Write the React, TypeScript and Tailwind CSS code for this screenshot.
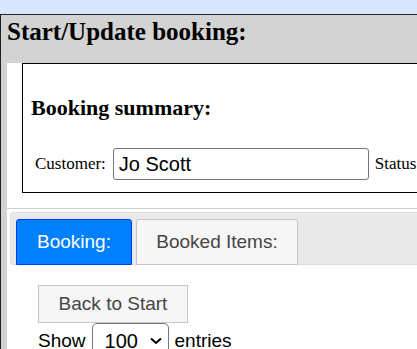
export default function App() {
  return (
    <div className="h-[349px] w-[417px] overflow-hidden bg-[#d8e7fb] pt-[14px]">
      <div className="w-[640px] border-t border-l border-[#222222] bg-[#d3d3d3] pl-[6px]">
        {/* Title */}
        <h2 className="h-[34px] font-['Liberation_Serif',serif] text-[25px] leading-[34px] font-bold text-black">
          Start/Update booking:
        </h2>

        <div className="h-[300px] bg-white">
          {/* Summary box */}
          <div className="ml-[15px] mt-[14px] box-border h-[130px] w-[600px] border border-black font-['Liberation_Serif',serif] text-black">
            <h3 className="ml-[8px] mt-[31px] text-[22px] leading-[26px] font-bold">
              Booking summary:
            </h3>
            <div className="mt-[27px] flex items-center pl-[12px] text-[17px]">
              <span>Customer:</span>
              <input
                defaultValue="Jo Scott"
                className="ml-[7px] box-border h-[32px] w-[256px] rounded-[3px] border border-[#767676] px-[5px] font-['Liberation_Sans',sans-serif] text-[20px] text-black outline-none"
              />
              <span className="ml-[6px]">Status</span>
            </div>
          </div>

          <div className="mt-[15px] border-t border-[#cccccc]" />

          {/* Tabs */}
          <div className="ml-[3px] mt-[3px] flex box-border h-[53px] gap-[4px] rounded-[3px] border border-[#dddddd] bg-[#e9e9e9] pl-[5px] pt-[6px] font-['Liberation_Sans',sans-serif] text-[19px]">
            <div className="box-border flex h-[46px] w-[116px] items-center justify-center rounded-t-[3px] border border-[#003eff] bg-[#007fff] text-white">
              Booking:
            </div>
            <div className="box-border flex h-[46px] w-[162px] items-center justify-center rounded-t-[3px] border border-[#c5c5c5] bg-[#f6f6f6] text-[#454545]">
              Booked Items:
            </div>
          </div>

          {/* Panel */}
          <div className="pl-[31px] pt-[20px] font-['Liberation_Sans',sans-serif] text-[19px] text-[#333333]">
            <button className="box-border h-[38px] w-[150px] border border-[#c5c5c5] bg-[#f6f6f6] text-[#454545]">
              Back to Start
            </button>
            <div className="flex items-center text-black">
              <span>Show</span>
              <div className="ml-[6px] box-border flex h-[36px] w-[77px] items-center rounded-[5px] border border-[#767676] pl-[12px] text-[20px]">
                <span>100</span>
                <svg className="ml-[12px]" width="12" height="8" viewBox="0 0 12 8">
                  <path d="M1 1.5 L6 6 L11 1.5" fill="none" stroke="black" strokeWidth="2" />
                </svg>
              </div>
              <span className="ml-[6px]">entries</span>
            </div>
          </div>
        </div>
      </div>
    </div>
  );
}
